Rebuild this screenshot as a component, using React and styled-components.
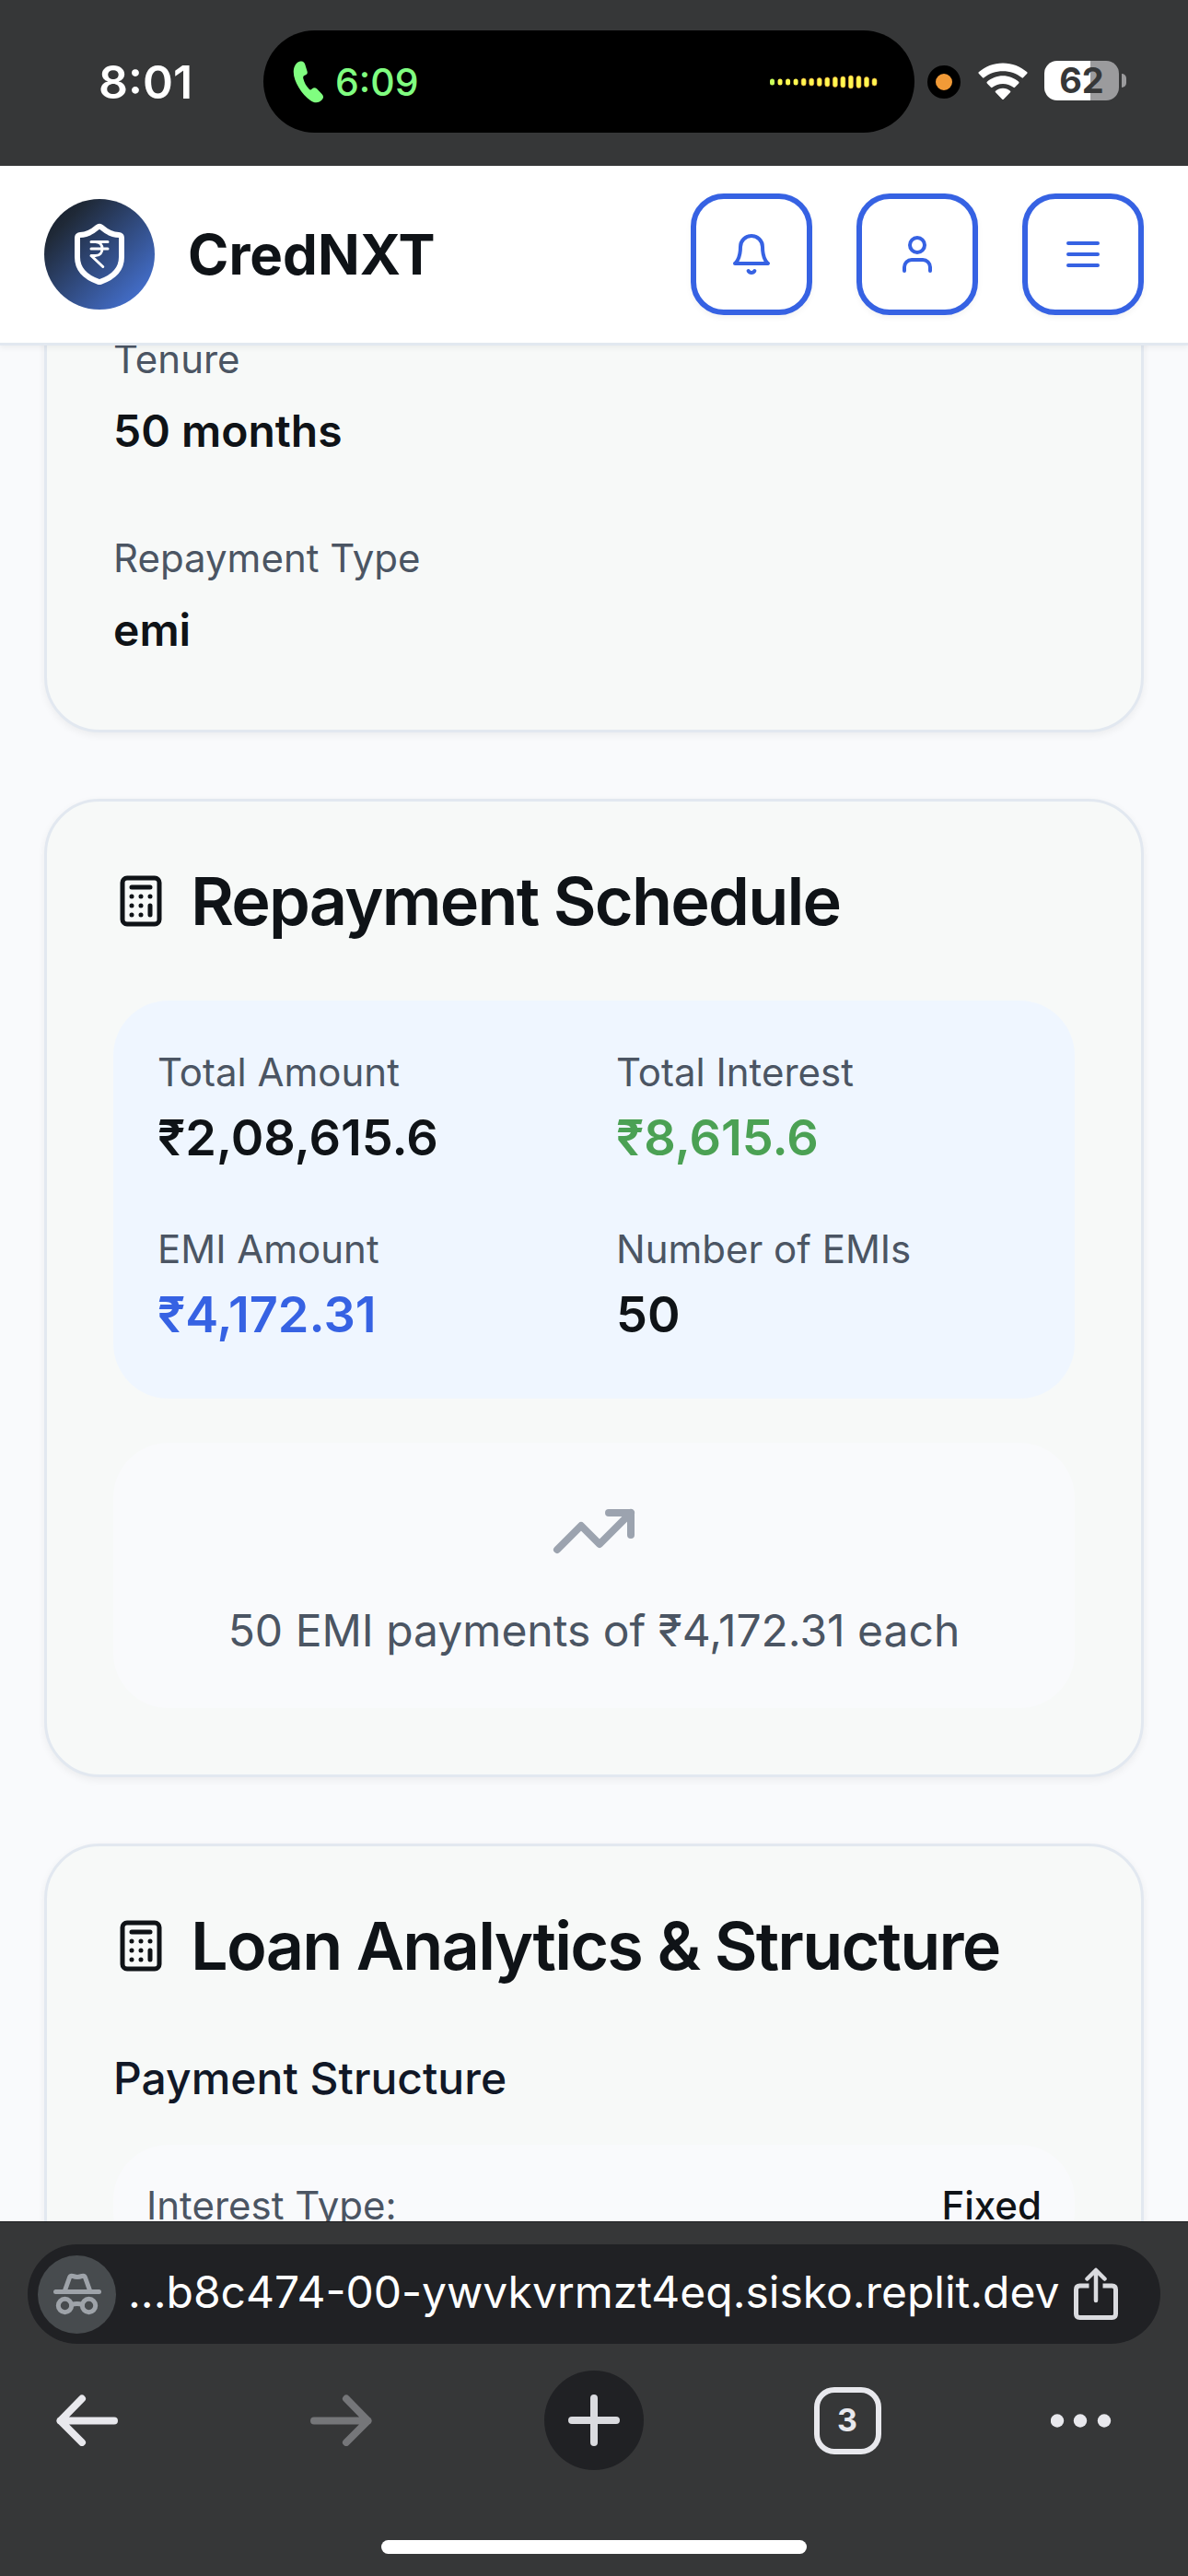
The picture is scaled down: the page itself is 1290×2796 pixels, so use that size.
import React from "react";
import styled, { createGlobalStyle } from "styled-components";

const GlobalStyle = createGlobalStyle`
  *, *::before, *::after { box-sizing: border-box; }
  html { -webkit-text-size-adjust: 100%; }
  body {
    margin: 0;
    background: #363738;
    color: #0f1317;
    font-family: Inter, "Liberation Sans", sans-serif;
    -webkit-font-smoothing: antialiased;
  }
  h1, h2, h3, p, dl, dt, dd { margin: 0; }
  button, input { font: inherit; color: inherit; }
  svg { display: block; flex: none; }
`;

const Screen = styled.div`
  display: flex;
  flex-direction: column;
  height: 100vh;
  overflow: hidden;
`;

/* ---------- Status bar ---------- */

const StatusBar = styled.div`
  flex: none;
  display: grid;
  grid-template-columns: 286px minmax(0, 1fr) 297px;
  align-items: center;
  height: 180px;
  padding-bottom: 3px;
  background: #363738;
`;

const Clock = styled.time`
  padding-left: 107px;
  color: #fff;
  font-size: 50px;
  font-weight: 600;
  line-height: 60px;
`;

const Island = styled.div`
  display: flex;
  align-items: center;
  justify-content: space-between;
  height: 111px;
  padding: 0 40px 0 32px;
  border-radius: 56px;
  background: #000;
`;

const CallInfo = styled.div`
  display: flex;
  align-items: center;
  gap: 12px;
  color: #80fe80;
  font-size: 41px;
  font-weight: 500;
  line-height: 48px;
`;

const StatusIcons = styled.div`
  display: flex;
  align-items: center;
  padding-left: 14px;
`;

const MicDot = styled.span`
  width: 36px;
  height: 36px;
  border: 9px solid #000;
  border-radius: 50%;
  background: #f19a37;
`;

const WifiIcon = styled.svg`
  margin-left: 19px;
`;

const Battery = styled.div`
  display: flex;
  align-items: center;
  gap: 3px;
  margin-left: 18px;
  padding-bottom: 3px;
`;

const BatteryBody = styled.div`
  display: flex;
  align-items: center;
  justify-content: center;
  width: 81px;
  height: 43px;
  border-radius: 14px;
  background: linear-gradient(90deg, #fff 62%, #9b9b9d 62%);
  color: #363738;
  font-size: 38px;
  font-weight: 700;
  line-height: 42px;
`;

const BatteryTip = styled.span`
  width: 5px;
  height: 15px;
  border-radius: 0 8px 8px 0;
  background: #9b9b9d;
`;

/* ---------- App header ---------- */

const Header = styled.header`
  position: relative;
  z-index: 1;
  flex: none;
  display: flex;
  align-items: center;
  justify-content: space-between;
  padding: 30px 48px;
  border-bottom: 3px solid #e2e8f0;
  background: #fff;
  box-shadow: 0 3px 6px rgba(0, 0, 0, 0.05);
`;

const Brand = styled.a`
  display: flex;
  align-items: center;
  gap: 36px;
  color: #0f1317;
  font-size: 60px;
  font-weight: 700;
  line-height: 84px;
  text-decoration: none;
`;

const LogoMark = styled.svg`
  border-radius: 50%;
  background: linear-gradient(135deg, #111827 0%, #1f2937 20%, #4a7be6 100%);
`;

const HeaderActions = styled.nav`
  display: flex;
  gap: 48px;
`;

const IconButton = styled.button`
  display: flex;
  align-items: center;
  justify-content: center;
  width: 132px;
  height: 132px;
  padding: 0;
  border: 6px solid #3662e3;
  border-radius: 36px;
  background: #fff;
  color: #3662e3;
  box-shadow: 0 3px 6px rgba(0, 0, 0, 0.05);
`;

/* ---------- Page content ---------- */

const Viewport = styled.main`
  flex: 1;
  min-height: 0;
  overflow: hidden;
  background: #f9fafc;
`;

const CardList = styled.div`
  display: flex;
  flex-direction: column;
  gap: 72px;
  margin-top: -90px;
  padding: 0 48px;
`;

const Card = styled.section`
  padding: 72px;
  border: 3px solid #e2e8f0;
  border-radius: 60px;
  background: #f7f9f8;
  box-shadow: 0 3px 9px rgba(0, 0, 0, 0.06);
`;

const DetailList = styled.dl`
  display: flex;
  flex-direction: column;
  gap: 72px;
`;

const Detail = styled.div`
  display: flex;
  flex-direction: column;
  gap: 12px;
`;

const Label = styled.dt`
  color: #4b5563;
  font-size: 42px;
  line-height: 60px;
`;

const DetailValue = styled.dd`
  font-size: 48px;
  font-weight: 600;
  line-height: 72px;
`;

const CardTitle = styled.h2`
  display: flex;
  align-items: center;
  gap: 24px;
  margin-bottom: 72px;
  font-size: 72px;
  font-weight: 600;
  line-height: 72px;
  letter-spacing: -0.025em;
  white-space: nowrap;
`;

const SummaryGrid = styled.dl`
  display: grid;
  grid-template-columns: 1fr 1fr;
  gap: 48px;
  padding: 48px;
  border-radius: 60px;
  background: #eff6ff;
`;

const toneColors = { default: "#0f1317", success: "#4ba154", primary: "#3662e3" };

const SummaryValue = styled.dd`
  padding-bottom: 3px;
  color: ${({ $tone }) => toneColors[$tone]};
  font-size: 54px;
  font-weight: 600;
  line-height: 81px;
`;

const Note = styled.div`
  display: flex;
  flex-direction: column;
  align-items: center;
  gap: 24px;
  margin-top: 48px;
  padding: 48px;
  border-radius: 60px;
  background: #f9fafc;
  color: #9ca3af;
`;

const NoteText = styled.p`
  color: #4b5563;
  font-size: 48px;
  line-height: 72px;
`;

const SubTitle = styled.h3`
  margin-bottom: 36px;
  color: #111827;
  font-size: 48px;
  font-weight: 500;
  line-height: 72px;
`;

const StructureList = styled.dl`
  padding: 36px;
  border-radius: 60px;
  background: #f9fafc;
`;

const StructureRow = styled.div`
  display: flex;
  justify-content: space-between;
`;

const StructureValue = styled.dd`
  font-size: 42px;
  font-weight: 500;
  line-height: 60px;
`;

/* ---------- Browser toolbar ---------- */

const BrowserBar = styled.footer`
  position: relative;
  z-index: 1;
  flex: none;
  display: flex;
  flex-direction: column;
  padding: 24px 30px;
  border-top: 1px solid #1b1c1d;
  background: #363738;
`;

const AddressBar = styled.div`
  display: flex;
  align-items: center;
  height: 108px;
  padding: 0 45px 0 11px;
  border-radius: 54px;
  background: #202124;
`;

const IncognitoBadge = styled.span`
  flex: none;
  display: flex;
  align-items: center;
  justify-content: center;
  width: 85px;
  height: 85px;
  border-radius: 50%;
  background: #474b4e;
  color: #9ea3a9;
`;

const AddressInput = styled.input`
  flex: 1;
  min-width: 0;
  height: 72px;
  margin: 0 10px 0 13px;
  padding: 0 0 5px;
  border: 0;
  outline: 0;
  background: transparent;
  color: #fff;
  font-size: 48px;
  font-weight: 400;
`;

const PlainButton = styled.button`
  flex: none;
  display: flex;
  align-items: center;
  justify-content: ${({ $align }) => $align || "center"};
  padding: 0;
  border: 0;
  background: transparent;
  color: ${({ $muted }) => ($muted ? "#757679" : "#e8e8ed")};
`;

const NavRow = styled.nav`
  display: flex;
  justify-content: space-between;
  margin-top: 29px;
  padding: 0 11px;
`;

const NavButton = styled(PlainButton)`
  width: 108px;
  height: 108px;
`;

const NewTabButton = styled(NavButton)`
  border-radius: 50%;
  background: #202124;
  color: #dadbdf;
`;

const TabCount = styled.span`
  display: flex;
  align-items: center;
  justify-content: center;
  width: 73px;
  height: 73px;
  border: 6px solid #e8e8ed;
  border-radius: 22px;
  font-size: 34px;
  font-weight: 700;
  line-height: 42px;
`;

const HomeIndicator = styled.span`
  align-self: center;
  width: 462px;
  max-width: 60%;
  height: 15px;
  margin-top: 76px;
  border-radius: 8px;
  background: #fff;
`;

/* ---------- Icons ---------- */

function StrokeIcon({ size, width = 2, children }) {
  return (
    <svg
      width={size}
      height={size}
      viewBox="0 0 24 24"
      fill="none"
      stroke="currentColor"
      strokeWidth={width}
      strokeLinecap="round"
      strokeLinejoin="round"
      aria-hidden="true"
    >
      {children}
    </svg>
  );
}

const CalculatorIcon = () => (
  <StrokeIcon size={60}>
    <rect width="16" height="20" x="4" y="2" rx="2" />
    <path d="M8 6h8M16 14v4M16 10h.01M12 10h.01M8 10h.01M12 14h.01M8 14h.01M12 18h.01M8 18h.01" />
  </StrokeIcon>
);

const levels = [7, 7, 7, 7, 8, 8, 9, 10, 11, 12, 14, 13, 11, 8];

const Waveform = () => (
  <svg width="118" height="16" viewBox="0 0 118 16" aria-hidden="true">
    {levels.map((h, i) => (
      <rect
        key={i}
        x={i * 8.54 + 1}
        y={8 - h / 2}
        width="5"
        height={h}
        rx="2.5"
        fill={i === 0 ? "#c8ff5a" : "#fff850"}
        stroke={i > 3 ? "#f2a33a" : "none"}
        strokeWidth="0.6"
      />
    ))}
  </svg>
);

const summary = [
  { label: "Total Amount", value: "₹2,08,615.6", tone: "default" },
  { label: "Total Interest", value: "₹8,615.6", tone: "success" },
  { label: "EMI Amount", value: "₹4,172.31", tone: "primary" },
  { label: "Number of EMIs", value: "50", tone: "default" },
];

const details = [
  { label: "Tenure", value: "50 months" },
  { label: "Repayment Type", value: "emi" },
];

export default function App() {
  return (
    <Screen>
      <GlobalStyle />
      <StatusBar>
        <Clock>8:01</Clock>
        <Island>
          <CallInfo>
            <svg width="34" height="46" viewBox="0 0 34 46" fill="currentColor" aria-hidden="true">
              <path d="M1 9C2 4 5 1 8.500 .5C11 .2 12.500 1.500 13.300 4L15.600 11.500C16.200 13.500 15.300 14.800 13.500 15.500C11.300 16.300 10.900 17.500 11.400 19.500C12.400 23.500 14.500 27.500 17.500 30.500C18.600 31.700 19.500 31.700 20.700 30.500C22.300 28.900 24.200 28.600 26 30.300L31.700 36.300C33.500 38.200 33.500 40.200 31.700 42.300C28.500 46 23.500 46.300 19 43C9 35.800 -1 20 1 9Z" />
            </svg>
            <span>6:09</span>
          </CallInfo>
          <Waveform />
        </Island>
        <StatusIcons>
          <MicDot />
          <WifiIcon width="54" height="41" viewBox="0 0 54 41" fill="#fff" aria-hidden="true">
            <path d="M27 .5C37 .5 46.300 4.200 53.300 10.300Q54 11 53.300 11.800L49 16.300Q48.300 17 47.500 16.300C42 11.800 34.700 9.200 27 9.200S12 11.800 6.500 16.300Q5.700 17 5 16.300L.7 11.800Q0 11 .7 10.300C7.700 4.200 17 .5 27 .5Z" />
            <path d="M27 14.300C33.300 14.300 39.500 16.700 44.200 20.800Q45 21.600 44.200 22.400L40 26.700Q39.200 27.500 38.400 26.800C35.200 24.400 31.200 23 27 23S18.800 24.400 15.600 26.800Q14.800 27.500 14 26.700L9.800 22.400Q9 21.600 9.800 20.800C14.500 16.700 20.700 14.300 27 14.300Z" />
            <path d="M27 27.800C29.900 27.800 32.800 28.900 35 30.700Q35.800 31.500 35 32.300L28 39.500Q27 40.500 26 39.500L19 32.300Q18.200 31.500 19 30.700C21.200 28.900 24.100 27.800 27 27.800Z" />
          </WifiIcon>
          <Battery>
            <BatteryBody>62</BatteryBody>
            <BatteryTip />
          </Battery>
        </StatusIcons>
      </StatusBar>

      <Header>
        <Brand href="#">
          <LogoMark width="120" height="120" viewBox="0 0 120 120" fill="none" stroke="#fff" strokeWidth="2" strokeLinecap="round" strokeLinejoin="round" aria-hidden="true">
            <g transform="translate(24 24) scale(3)">
              <path d="M20 13c0 5-3.500 7.500-7.660 8.950a1 1 0 0 1-.67-.01C7.500 20.500 4 18 4 13V6a1 1 0 0 1 1-1c2 0 4.500-1.200 6.240-2.720a1.170 1.170 0 0 1 1.520 0C14.510 3.810 17 5 19 5a1 1 0 0 1 1 1z" />
            </g>
            <g transform="translate(42 42) scale(1.5)">
              <path d="M6 3h12M6 8h12M6 13l8.500 8M6 13h3M9 13c6.667 0 6.667-10 0-10" />
            </g>
          </LogoMark>
          CredNXT
        </Brand>
        <HeaderActions>
          <IconButton aria-label="Notifications">
            <StrokeIcon size={48}>
              <path d="M6 8a6 6 0 0 1 12 0c0 7 3 9 3 9H3s3-2 3-9" />
              <path d="M10.300 21a1.940 1.940 0 0 0 3.400 0" />
            </StrokeIcon>
          </IconButton>
          <IconButton aria-label="Profile">
            <StrokeIcon size={48}>
              <path d="M19 21v-2a4 4 0 0 0-4-4H9a4 4 0 0 0-4 4v2" />
              <circle cx="12" cy="7" r="4" />
            </StrokeIcon>
          </IconButton>
          <IconButton aria-label="Menu">
            <StrokeIcon size={48}>
              <path d="M4 6h16M4 12h16M4 18h16" />
            </StrokeIcon>
          </IconButton>
        </HeaderActions>
      </Header>

      <Viewport>
        <CardList>
          <Card>
            <DetailList>
              {details.map(({ label, value }) => (
                <Detail key={label}>
                  <Label>{label}</Label>
                  <DetailValue>{value}</DetailValue>
                </Detail>
              ))}
            </DetailList>
          </Card>

          <Card>
            <CardTitle>
              <CalculatorIcon />
              Repayment Schedule
            </CardTitle>
            <SummaryGrid>
              {summary.map(({ label, value, tone }) => (
                <div key={label}>
                  <Label>{label}</Label>
                  <SummaryValue $tone={tone}>{value}</SummaryValue>
                </div>
              ))}
            </SummaryGrid>
            <Note>
              <StrokeIcon size={96}>
                <path d="M22 7l-8.500 8.500-5-5L2 17" />
                <path d="M16 7h6v6" />
              </StrokeIcon>
              <NoteText>50 EMI payments of ₹4,172.31 each</NoteText>
            </Note>
          </Card>

          <Card>
            <CardTitle>
              <CalculatorIcon />
              Loan Analytics &amp; Structure
            </CardTitle>
            <SubTitle>Payment Structure</SubTitle>
            <StructureList>
              <StructureRow>
                <Label>Interest Type:</Label>
                <StructureValue>Fixed</StructureValue>
              </StructureRow>
            </StructureList>
          </Card>
        </CardList>
      </Viewport>

      <BrowserBar>
        <AddressBar>
          <IncognitoBadge>
            <svg width="52" height="46" viewBox="0 0 52 46" fill="none" stroke="currentColor" strokeWidth="5" strokeLinecap="round" strokeLinejoin="round" aria-hidden="true">
              <path d="M2.500 20.500h47" />
              <path d="M12.500 19L17.500 5Q18.500 2.800 20.800 3.400Q26 5.400 31.200 3.400Q33.500 2.800 34.500 5L39.500 19" />
              <circle cx="12.500" cy="35.500" r="7.200" />
              <circle cx="38.500" cy="35.500" r="7.200" />
              <path d="M19.500 34.500Q26 32.500 31.500 34.500" />
            </svg>
          </IncognitoBadge>
          <AddressInput aria-label="Address" readOnly defaultValue="...b8c474-00-ywvkvrmzt4eq.sisko.replit.dev" />
          <PlainButton aria-label="Share">
            <svg width="50" height="58" viewBox="0 0 50 58" fill="none" stroke="#dadbdf" strokeWidth="5" strokeLinecap="round" strokeLinejoin="round" aria-hidden="true">
              <path d="M17.500 20H7.500Q3.500 20 3.500 24V50.500Q3.500 54.500 7.500 54.500H42.500Q46.500 54.500 46.500 50.500V24Q46.500 20 42.500 20H32.500" strokeLinecap="butt" />
              <path d="M25 36V4M15.500 12.500L25 3L34.500 12.500" strokeWidth="4.500" />
            </svg>
          </PlainButton>
        </AddressBar>
        <NavRow>
          <NavButton aria-label="Back">
            <svg width="68" height="56" viewBox="0 0 68 56" fill="none" stroke="currentColor" strokeWidth="8" strokeLinecap="round" strokeLinejoin="round" aria-hidden="true">
              <path d="M63 28.500H4.500M28 4.500L4.500 28.500L28 52" />
            </svg>
          </NavButton>
          <NavButton aria-label="Forward" $muted>
            <svg width="68" height="56" viewBox="0 0 68 56" fill="none" stroke="currentColor" strokeWidth="8" strokeLinecap="round" strokeLinejoin="round" aria-hidden="true">
              <path d="M5 28.500H63.500M40 4.500L63.500 28.500L40 52" />
            </svg>
          </NavButton>
          <NewTabButton aria-label="New tab">
            <svg width="56" height="56" viewBox="0 0 56 56" fill="none" stroke="currentColor" strokeWidth="8" strokeLinecap="round" aria-hidden="true">
              <path d="M28 4V52M4 28H52" />
            </svg>
          </NewTabButton>
          <NavButton aria-label="Tabs">
            <TabCount>3</TabCount>
          </NavButton>
          <NavButton aria-label="More" $align="flex-start">
            <svg width="66" height="16" viewBox="0 0 66 16" fill="currentColor" aria-hidden="true">
              <circle cx="7" cy="8.500" r="7.200" />
              <circle cx="32" cy="8.500" r="7.200" />
              <circle cx="58" cy="8.500" r="7.200" />
            </svg>
          </NavButton>
        </NavRow>
        <HomeIndicator />
      </BrowserBar>
    </Screen>
  );
}
